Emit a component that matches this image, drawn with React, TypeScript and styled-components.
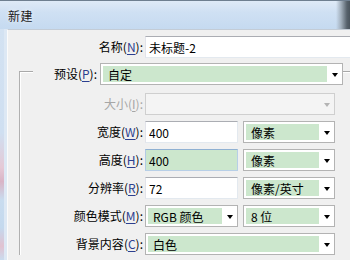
import React from "react";
import styled, { createGlobalStyle, css } from "styled-components";

const GlobalStyle = createGlobalStyle`
  html, body {
    margin: 0;
    padding: 0;
    width: 350px;
    height: 260px;
    overflow: hidden;
    background: #f0f0f0;
  }
  body {
    font-family: "Noto Sans CJK SC", "Noto Sans", sans-serif;
    font-size: 12px;
    color: #000;
  }
`;

const Window = styled.div`
  width: 350px;
  height: 260px;
  display: flex;
  flex-direction: column;
  overflow: hidden;
`;

const TitleBar = styled.div`
  height: 28px;
  flex-shrink: 0;
  border-top: 1px solid #6f7f90;
  box-sizing: content-box;
  display: flex;
  align-items: center;
  padding-left: 8px;
  background:
    linear-gradient(to right, rgba(0,0,0,0) 0, rgba(0,0,0,0) 336px, #a3b0bd 341px, #56616b 347px, #4a545d 350px),
    linear-gradient(to bottom, #dfeaf7 0%, #cfe0f3 40%, #c5daf0 100%);
`;

const Title = styled.span`
  font-size: 12px;
  color: #1a1a1a;
  letter-spacing: 0.5px;
  text-shadow: 0 0 4px rgba(255, 255, 255, 0.9);
`;

const Body = styled.div`
  flex: 1;
  display: flex;
  min-height: 0;
`;

const FrameEdge = styled.div`
  width: 4px;
  flex-shrink: 0;
  background: linear-gradient(
    to bottom,
    #d3e2f2 0%,
    #cfdff1 45%,
    #e5c9d6 60%,
    #d9b4c6 66%,
    #c9dcef 74%,
    #c4d9ee 86%,
    #e1c2d1 94%,
    #cadcef 100%
  );
`;

const FrameInner = styled.div`
  width: 3px;
  flex-shrink: 0;
  background: #dde8f4;
`;

const Client = styled.div`
  flex: 1;
  min-width: 0;
  background: #f0f0f0;
  border-top: 1px solid #c3ccd6;
  border-left: 1px solid #fbfbfb;
  padding-top: 6px;
  overflow: hidden;
  display: flex;
  flex-direction: column;
`;

const Row = styled.div`
  display: flex;
  align-items: center;
  gap: 2px;
  height: 22px;
  white-space: nowrap;
  flex-shrink: 0;
`;

const Label = styled.span<{ $w: number; $disabled?: boolean }>`
  width: ${(p) => p.$w}px;
  flex-shrink: 0;
  text-align: right;
  font-size: 12px;
  line-height: 22px;
  color: ${(p) => (p.$disabled ? "#a6a6a6" : "#000")};
`;

const Key = styled.span<{ $disabled?: boolean }>`
  text-decoration: underline;
  text-underline-offset: 2px;
  color: ${(p) => (p.$disabled ? "#a6a6a6" : "#2c3f8f")};
`;

const Pair = styled.div`
  display: flex;
  gap: 5px;
  flex-shrink: 0;
`;

const TextBox = styled.input<{ $w: number; $green?: boolean; $focus?: boolean }>`
  width: ${(p) => p.$w}px;
  height: 22px;
  box-sizing: border-box;
  flex-shrink: 0;
  margin: 0;
  padding: 0 3px;
  font-family: "Noto Sans CJK SC", "Noto Sans", sans-serif;
  font-size: 12px;
  color: #000;
  outline: none;
  background: ${(p) => (p.$green ? "#cce7cd" : "#ffffff")};
  border: 1px solid;
  border-color: #abadb3 #e3e9ef #e3e9ef #e2e3ea;
  ${(p) =>
    p.$focus &&
    css`
      border-color: #8fb0d2 #b7cfe7 #b7cfe7 #b2cbe4;
    `}
`;

const Combo = styled.div<{ $w: number; $disabled?: boolean }>`
  width: ${(p) => p.$w}px;
  height: 22px;
  box-sizing: border-box;
  flex-shrink: 0;
  display: flex;
  padding: 2px 0 2px 2px;
  border: 1px solid ${(p) => (p.$disabled ? "#cfcfcf" : "#b3b3b3")};
  background: ${(p) => (p.$disabled ? "#f4f4f4" : "#ffffff")};
`;

const ComboValue = styled.div<{ $green?: boolean }>`
  flex: 1;
  min-width: 0;
  display: flex;
  align-items: center;
  padding-left: 5px;
  font-size: 12px;
  color: #000;
  background: ${(p) => (p.$green ? "#cce7cd" : "transparent")};
`;

const ArrowBox = styled.div`
  width: 15px;
  flex-shrink: 0;
  display: flex;
  align-items: center;
  justify-content: center;
`;

const Arrow = styled.span<{ $disabled?: boolean }>`
  width: 0;
  height: 0;
  border-left: 3.5px solid transparent;
  border-right: 3.5px solid transparent;
  border-top: 4px solid ${(p) => (p.$disabled ? "#b4b4b4" : "#000")};
  margin-top: 1px;
`;

const Group = styled.fieldset`
  margin: 0 0 0 11px;
  padding: 8px 0 0 0;
  min-width: 0;
  border: none;
  border-top: 1px solid #a9a9a9;
  border-left: 1px solid #b0b0b0;
  box-shadow: inset 1px 1px 0 #ffffff;
  display: flex;
  flex-direction: column;
  gap: 6px;
`;

const Legend = styled.legend`
  margin-left: 13px;
  padding: 5px 0 0 0;
  background: #f0f0f0;
`;

const LegendRow = styled.div`
  display: flex;
  align-items: center;
  gap: 3px;
  white-space: nowrap;
`;

type ComboProps = { w: number; value?: string; green?: boolean; disabled?: boolean };

const Select = ({ w, value, green, disabled }: ComboProps) => (
  <Combo $w={w} $disabled={disabled}>
    <ComboValue $green={green}>{value}</ComboValue>
    <ArrowBox>
      <Arrow $disabled={disabled} />
    </ArrowBox>
  </Combo>
);

type LabelTextProps = { text: string; k: string; disabled?: boolean };
const LabelText = ({ text, k, disabled }: LabelTextProps) => (
  <>
    {text}(<Key $disabled={disabled}>{k}</Key>):
  </>
);

export default function App() {
  return (
    <>
      <GlobalStyle />
      <Window>
        <TitleBar>
          <Title>新建</Title>
        </TitleBar>
        <Body>
          <FrameEdge />
          <FrameInner />
          <Client>
            <Row>
              <Label $w={135}>
                <LabelText text="名称" k="N" />
              </Label>
              <TextBox $w={215} readOnly defaultValue="未标题-2" />
            </Row>
            <Group>
              <Legend>
                <LegendRow>
                  <Label $w={64}>
                    <LabelText text="预设" k="P" />
                  </Label>
                  <Select w={243} value="自定" green />
                </LegendRow>
              </Legend>
              <Row>
                <Label $w={123} $disabled>
                  <LabelText text="大小" k="I" disabled />
                </Label>
                <Select w={190} disabled />
              </Row>
              <Row>
                <Label $w={123}>
                  <LabelText text="宽度" k="W" />
                </Label>
                <Pair>
                  <TextBox $w={93} readOnly defaultValue="400" />
                  <Select w={92} value="像素" green />
                </Pair>
              </Row>
              <Row>
                <Label $w={123}>
                  <LabelText text="高度" k="H" />
                </Label>
                <Pair>
                  <TextBox $w={93} $green $focus readOnly defaultValue="400" />
                  <Select w={92} value="像素" green />
                </Pair>
              </Row>
              <Row>
                <Label $w={123}>
                  <LabelText text="分辨率" k="R" />
                </Label>
                <Pair>
                  <TextBox $w={93} readOnly defaultValue="72" />
                  <Select w={92} value="像素/英寸" green />
                </Pair>
              </Row>
              <Row>
                <Label $w={123}>
                  <LabelText text="颜色模式" k="M" />
                </Label>
                <Pair>
                  <Select w={93} value="RGB 颜色" green />
                  <Select w={92} value="8 位" green />
                </Pair>
              </Row>
              <Row>
                <Label $w={123}>
                  <LabelText text="背景内容" k="C" />
                </Label>
                <Select w={190} value="白色" green />
              </Row>
            </Group>
          </Client>
        </Body>
      </Window>
    </>
  );
}
